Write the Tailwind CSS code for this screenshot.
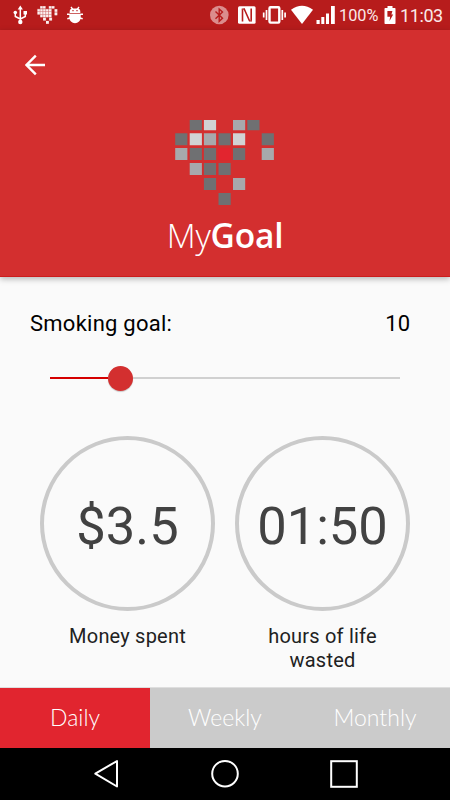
<!DOCTYPE html>
<html lang="en">
<head>
<meta charset="utf-8">
<title>MyGoal</title>
<script src="https://cdn.jsdelivr.net/npm/@tailwindcss/browser@4"></script>
</head>
<body class="w-[450px] h-[800px] overflow-hidden bg-[#fafafa] flex flex-col font-['Roboto',sans-serif] text-black">
  <div class="h-[30px] shrink-0 bg-[#b71c1c] flex items-center text-white">
    <svg class="w-[150px] h-[30px]" viewBox="0 0 150 30" fill="none" stroke="#fff">
      <path d="M20.300 8v14M15.300 13v3.500l5 2.500M25.300 13v3.500l-5 2.500" stroke-width="1.500"/>
      <path d="M20.300 5.500l2.600 4h-5.200zM23.500 11h3.500v3.500h-3.500z" fill="#fff" stroke="none"/>
      <circle cx="15.300" cy="12.500" r="1.800" fill="#fff" stroke="none"/><circle cx="20.300" cy="22" r="2.200" fill="#fff" stroke="none"/>
      <path d="M40 6h5.800v2.600H40zM37.300 8.800h14.600v8.400H40.200v-2.600h-2.900zM43.100 17.300h3v3.200h-3zM49.200 17.300h3v3.200h-3zM46 20.700h3v3h-3zM48.500 6h6.200v2.600h-6.200zM54.600 9h2.900v6.300h-2.900z" fill="#fff" fill-opacity=".35" stroke="none"/>
      <g fill="#fff" fill-opacity=".9" stroke="none">
        <path d="M40.300 6.300h2.300v2.300h-2.300zM43.100 6.300h2.300v2.300h-2.300zM49 6.300h2.300v2.300h-2.300zM51.800 6.300h2.500v2.300h-2.500z"/>
        <path d="M37.500 9.200h2.300v2.300h-2.300zM40.300 9.200h2.300v2.300h-2.300zM43.200 9.200h2.300v2.300h-2.300zM46.100 9.200h2.300v2.300h-2.300zM49 9.200h2.300v2.300h-2.300zM54.600 9.200h2.600v2.600h-2.600z"/>
        <path d="M37.500 12.100h2.300v2.300h-2.300zM40.300 12.100h2.300v2.300h-2.300zM43.200 12.100h2.300v2.300h-2.300zM46.100 12.100h2.300v2.300h-2.300zM49 12.100h2.300v2.300h-2.300zM54.600 12.600h2.600v2.600h-2.600z"/>
        <path d="M40.300 15h2.300v2.300h-2.300zM43.200 15h2.300v2.300h-2.300zM46.100 15h2.300v2.300h-2.300zM49 15h2.300v2.300h-2.300zM43.100 17.900h2.700v2.700h-2.700zM49.200 17.900h2.700v2.700h-2.700zM46 21h2.800v2.700h-2.800z"/>
      </g>
      <path d="M71 7l2 2.600M79 7l-2 2.600M67 14.300h16M67.300 18.800l4-1M82.700 18.800l-4-1" stroke-width="1.400"/>
      <path d="M69.700 13.400v-1.900a3 3 0 0 1 3-3h4.600a3 3 0 0 1 3 3v1.900zM69.300 14h11.400v3.500a5.700 5.700 0 0 1-11.400 0z" fill="#fff" stroke="none"/>
      <path d="M69.500 13.500h11" stroke="#b71c1c" stroke-width=".6"/>
      <path d="M72.400 10.700h1.200M76.400 10.700h1.200" stroke="#b71c1c" stroke-width="1.200"/>
    </svg>
    <svg class="w-[138px] h-[30px] ml-[50px]" viewBox="200 0 138 30" fill="none" stroke="#fff">
      <circle cx="219.300" cy="15" r="9.300" fill="#db8d8d" stroke="none"/>
      <path d="M215.500 11.500l7 6.800-3.300 3V9l3.300 3-7 6.800" stroke="#b71c1c" stroke-width="1.400"/>
      <rect x="238" y="6.200" width="17.600" height="17.600" rx="1.500" fill="#fff" stroke="none"/>
      <path d="M242.500 21.500V9.200M251.200 20.800V8.500M244 8.500l5.600 12.500" stroke="#b71c1c" stroke-width="1.600"/>
      <path d="M241.700 9h3M249 21h3" stroke="#b71c1c" stroke-width="1.200"/>
      <rect x="269.500" y="7.300" width="9.800" height="15.300" rx="1" stroke-width="2.400"/>
      <path d="M266.500 10v10M263.700 12.500v5M282.300 10v10M285.100 12.500v5" stroke-width="1.700"/>
      <path d="M291 9.700q11-8 22 0L302 24z" fill="#fff" stroke="none"/>
      <path d="M316.500 20h3.200v4h-3.200zM321.300 17h3v7h-3zM326 13.500h3v10.500h-3zM331 6h3.800v18H331z" fill="#fff" stroke="none"/>
    </svg>
    <span class="w-[45px] ml-[1px] text-[16.300px] pt-[2px] text-[#fbe9e9]">100%</span>
    <svg class="w-[12px] h-[20px]" viewBox="0 0 12 20"><path fill="#fff" d="M3.500 1h5v2h2.300q.700 0 .700.700V18.300q0 .700-.700.700H1.200q-.700 0-.700-.700V3.700Q.500 3 1.200 3h2.300z"/><path fill="#b71c1c" d="M3.400 6h5l-1 3.500h1.800L5.500 16l.6-4.300H3.400z"/></svg>
    <span class="ml-[4px] text-[18px] tracking-[-0.400px] pt-[1px] text-[#fbe9e9]">11:03</span>
  </div>
  <header class="h-[247px] shrink-0 bg-[#d32f2f] border-b border-[#cc1c1c] shadow-[0_2px_6px_rgba(0,0,0,0.28)] flex flex-col items-center">
    <div class="w-full h-[70px] pl-[25px] pt-[24px]">
      <svg class="w-[21px] h-[22px]" viewBox="0 0 21 22" fill="none" stroke="#fff" stroke-width="2.400"><path d="M1.700 11H20M10.800 1.700L1.500 11l9.300 9.300"/></svg>
    </div>
    <svg class="w-[100px] h-[106px] shrink-0" viewBox="175 100 100 106">
      <g fill="#6f7072">
        <path d="M189.700 120h12.200v10.300h-12.200zM247.300 120h12.200v10.300h-12.200z"/>
        <path d="M175.200 133.200h12.200v12h-12.200zM218.500 133.200h12.200v12h-12.200zM261.700 133.200h12.200v12h-12.200z"/>
        <path d="M189.700 148.100h12.200v12h-12.200zM203.900 148.100h12.200v12h-12.200zM233 148.100h12.200v12H233z"/>
        <path d="M203.900 163.100h12.200v12h-12.200zM218.500 163.100h12.200v12h-12.200zM203.900 178.100h12.200v12h-12.200zM218.500 193h12.200v12h-12.200z"/>
      </g>
      <g fill="#a7a9ac">
        <path d="M233 120h12.200v10.300H233zM203.900 133.200h12.200v12h-12.200zM175.200 148.100h12.200v12h-12.200zM261.700 148.100h12.200v12h-12.200zM189.700 163.100h12.200v12h-12.200zM233 178.100h12.200v12H233z"/>
      </g>
      <g fill="#d1d3d4"><path d="M203.900 120h12.200v10.300h-12.200zM189.700 133.200h12.200v12h-12.200zM233 133.200h12.200v12H233z"/></g>
      <path fill="#e2252f" d="M218.500 148.100h12.200v12h-12.200z"/>
    </svg>
    <h1 class="mt-[4px] text-[33.500px] leading-[50px] text-white whitespace-nowrap font-['Open_Sans',sans-serif] font-light tracking-[-0.200px]">My<span class="font-semibold">Goal</span></h1>
  </header>
  <main class="h-[410px] shrink-0 px-[30px]">
    <div class="flex justify-between pt-[33px] pr-[10px] text-[22px] leading-[28px]">
      <span class="tracking-[0.250px]">Smoking goal:</span><span>10</span>
    </div>
    <div class="mx-[20px] mt-[27px] h-[26px] flex items-center">
      <div class="w-[58px] h-[2px] bg-[#d50000]"></div>
      <div class="w-[25px] h-[25px] -ml-[0.500px] rounded-full bg-[#d32f2f] shadow-[0_1px_1px_rgba(0,0,0,0.2)]"></div>
      <div class="flex-1 h-[2px] bg-[#d0d0d0]"></div>
    </div>
    <div class="flex gap-[20px] mt-[45px] ml-[10px] w-[370px]">
      <section class="w-[175px] flex flex-col items-center">
        <div class="w-[175px] h-[175px] rounded-full border-4 border-[#cacaca] flex items-center justify-center text-[52.500px] text-[#424242] pt-[6px]">$3.5</div>
        <p class="mt-[13px] text-[20px] leading-[24px] tracking-[0.200px] text-[#212121]">Money spent</p>
      </section>
      <section class="w-[175px] flex flex-col items-center">
        <div class="w-[175px] h-[175px] rounded-full border-4 border-[#cacaca] flex items-center justify-center text-[52.500px] text-[#424242] pt-[6px]">01:50</div>
        <p class="mt-[13px] text-[20px] leading-[24px] tracking-[0.200px] text-[#212121] text-center">hours of life<br>wasted</p>
      </section>
    </div>
  </main>
  <nav class="h-[61px] shrink-0 border-t border-[#dedede] grid grid-cols-3 text-center text-white text-[23px] leading-[58px] font-['Lato',sans-serif] font-light">
    <div class="bg-[#e1252f]">Daily</div><div class="bg-[#cbcbcb]">Weekly</div><div class="bg-[#cbcbcb]">Monthly</div>
  </nav>
  <footer class="h-[52px] shrink-0 bg-black">
    <svg class="w-[450px] h-[52px]" viewBox="0 748 450 52" fill="none" stroke="#fff" stroke-width="2"><path d="M117 761v25.500L95.300 773.700z" stroke-linejoin="round"/><circle cx="225" cy="773.700" r="12.800"/><rect x="331.200" y="761.200" width="25.600" height="25.600"/></svg>
  </footer>
</body>
</html>
